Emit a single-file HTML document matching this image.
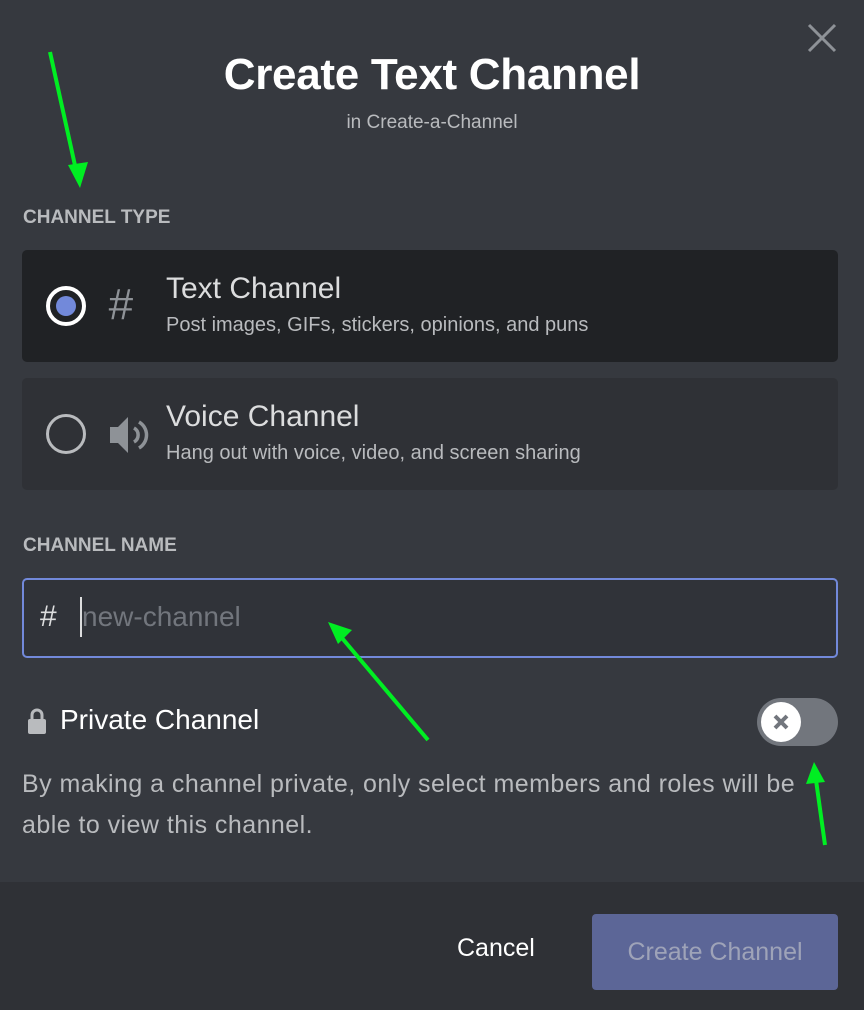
<!DOCTYPE html>
<html><head><style>
*{margin:0;padding:0;box-sizing:border-box}
body{width:864px;height:1010px;background:#36393f;font-family:"Liberation Sans",sans-serif;position:relative;overflow:hidden;color:#dcddde}
.abs{position:absolute}
h1{position:absolute;top:50px;left:0;width:864px;text-align:center;font-size:44px;font-weight:bold;color:#fff;letter-spacing:-0.3px}
.sub{top:112px;left:0;width:864px;text-align:center;font-size:19px;color:#b9bbbe}
.lbl{font-size:19px;font-weight:bold;color:#b9bbbe;left:23px}
.card{left:22px;width:816px;height:112px;border-radius:5px}
.t1{font-size:30px;color:#dcddde;left:166px}
.t2{font-size:20px;color:#b9bbbe;left:166px}
</style></head><body>
<svg class="abs" style="left:806px;top:22px" width="32" height="32"><path d="M3 3L29 29M29 3L3 29" stroke="#8e9297" stroke-width="3"/></svg>
<h1>Create Text Channel</h1>
<div class="abs sub">in Create-a-Channel</div>
<div class="abs lbl" style="top:207px">CHANNEL TYPE</div>
<div class="abs card" style="top:250px;background:#202225"></div>
<div class="abs card" style="top:378px;background:#2f3136"></div>
<div class="abs" style="left:46px;top:286px;width:40px;height:40px;border:4px solid #fff;border-radius:50%"></div>
<div class="abs" style="left:56px;top:296px;width:20px;height:20px;background:#7289da;border-radius:50%"></div>
<div class="abs" style="left:46px;top:414px;width:40px;height:40px;border:3px solid #b9bbbe;border-radius:50%"></div>
<div class="abs" style="left:108px;top:280px;font-size:44px;color:#8e9297;font-style:italic">#</div>
<svg class="abs" style="left:108px;top:415px" width="42" height="40"><path d="M2 12h8l10-10v36L10 28H2z" fill="#8e9297"/><path d="M26 13a8 8 0 0 1 0 14" stroke="#8e9297" stroke-width="3.5" fill="none"/><path d="M31 7a15 15 0 0 1 0 26" stroke="#8e9297" stroke-width="3.5" fill="none"/></svg>
<div class="abs t1" style="top:272px">Text Channel</div>
<div class="abs t2" style="top:314px">Post images, GIFs, stickers, opinions, and puns</div>
<div class="abs t1" style="top:400px">Voice Channel</div>
<div class="abs t2" style="top:442px">Hang out with voice, video, and screen sharing</div>
<div class="abs lbl" style="top:535px">CHANNEL NAME</div>
<div class="abs" style="left:22px;top:578px;width:816px;height:80px;border:2px solid #7289da;border-radius:5px;background:#303339"></div>
<div class="abs" style="left:40px;top:600px;font-size:30px;color:#dcddde">#</div>
<div class="abs" style="left:80px;top:597px;width:2px;height:40px;background:#dcddde"></div>
<div class="abs" style="left:82px;top:601px;font-size:28px;color:#72767d">new-channel</div>
<svg class="abs" style="left:27px;top:707px" width="20" height="28"><path d="M5 12V8a5 5 0 0 1 10 0v4" stroke="#b9bbbe" stroke-width="3" fill="none"/><rect x="1" y="12" width="18" height="15" rx="2" fill="#b9bbbe"/></svg>
<div class="abs" style="left:60px;top:704px;font-size:28px;color:#fff">Private Channel</div>
<div class="abs" style="left:757px;top:698px;width:81px;height:48px;background:#72767d;border-radius:24px"></div>
<div class="abs" style="left:761px;top:702px;width:40px;height:40px;background:#fff;border-radius:50%"></div>
<svg class="abs" style="left:771px;top:712px" width="20" height="20"><path d="M4 4L16 16M16 4L4 16" stroke="#72767d" stroke-width="4"/></svg>
<div class="abs" style="left:22px;top:764px;width:842px;font-size:25px;letter-spacing:0.45px;line-height:41px;color:#b9bbbe;white-space:nowrap">By making a channel private, only select members and roles will be<br>able to view this channel.</div>
<div class="abs" style="left:0;top:882px;width:864px;height:128px;background:#2f3136"></div>
<div class="abs" style="left:457px;top:934px;font-size:25px;color:#fff">Cancel</div>
<div class="abs" style="left:592px;top:914px;width:246px;height:76px;background:#5c6697;border-radius:4px;color:#9ea3b8;font-size:25px;text-align:center;line-height:76px">Create Channel</div>
<svg class="abs" style="left:0;top:0" width="864" height="1010">
<g stroke="#00ee22" stroke-width="4" fill="#00ee22">
<line x1="50" y1="52" x2="76" y2="170"/><polygon points="68,165 88,162 80,188" stroke="none"/>
<line x1="428" y1="740" x2="342" y2="638"/><polygon points="328,622 352,630 338,644" stroke="none"/>
<line x1="825" y1="845" x2="816" y2="780"/><polygon points="814,762 825,782 806,784" stroke="none"/>
</g></svg>
</body></html>
